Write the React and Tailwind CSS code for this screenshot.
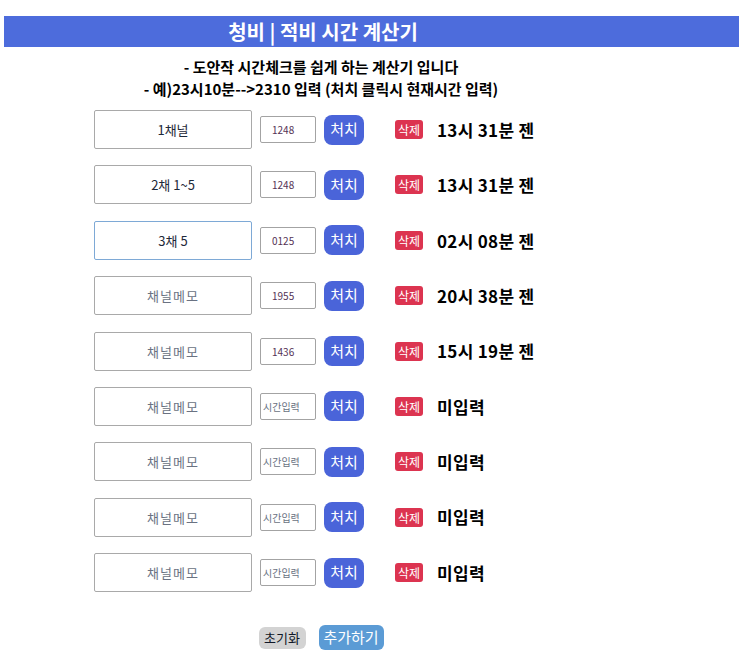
import { useState } from 'react';

const initialRows = [
  { memo: '1채널', time: '1248', result: '13시 31분 젠' },
  { memo: '2채 1~5', time: '1248', result: '13시 31분 젠' },
  { memo: '3채 5', time: '0125', result: '02시 08분 젠', focused: true },
  { memo: '', time: '1955', result: '20시 38분 젠' },
  { memo: '', time: '1436', result: '15시 19분 젠' },
  { memo: '', time: '', result: '미입력' },
  { memo: '', time: '', result: '미입력' },
  { memo: '', time: '', result: '미입력' },
  { memo: '', time: '', result: '미입력' },
];

const font = { fontFamily: '"Noto Sans CJK KR", "Noto Sans", sans-serif' };

function TimerRow({ row }) {
  return (
    <div className="flex items-center h-[39px] pl-[94px]">
      <input
        type="text"
        readOnly
        value={row.memo}
        placeholder="채널메모"
        className={`w-[158px] h-[39px] border rounded-[2px] text-center text-[13px] text-gray-800 placeholder:text-gray-500 placeholder:tracking-[1px] outline-none ${
          row.focused ? 'border-[#7ea9d6]' : 'border-[#a9a9a9]'
        }`}
      />
      <input
        type="text"
        readOnly
        value={row.time}
        placeholder="시간입력"
        className={`ml-2 w-[56px] h-[27px] border border-[#a3a3a3] rounded-[2px] text-[10px] text-[#553355] placeholder:text-gray-500 outline-none ${
          row.time ? 'pl-[11px]' : 'pl-[2px]'
        }`}
      />
      <button className="ml-2 w-[40px] h-[30px] rounded-lg bg-[#4a64d9] text-white text-[15px] font-normal">
        처치
      </button>
      <span className="ml-[31px] w-[28px] h-[19px] rounded-[3px] bg-[#dc3450] text-white text-[12px] leading-[19px] text-center">
        삭제
      </span>
      <span className="ml-[14px] text-[17px] font-bold text-black tracking-[0.3px]">{row.result}</span>
    </div>
  );
}

export default function App() {
  const [rows] = useState(initialRows);

  return (
    <div className="bg-white min-h-[664px] pt-[16px]" style={font}>
      <div className="mx-1 h-[31px] bg-[#4d6cdc] flex items-center">
        <h1 className="w-[638px] text-center text-white text-[20px] font-bold leading-none">
          청비 | 적비 시간 계산기
        </h1>
      </div>
      <div className="w-[642px] mt-[9px] text-center text-[15px] font-bold text-black leading-[22px]">
        <p>- 도안작 시간체크를 쉽게 하는 계산기 입니다</p>
        <p>- 예)23시10분--&gt;2310 입력 (처치 클릭시 현재시간 입력)</p>
      </div>
      <div className="mt-[10px] flex flex-col gap-[16.4px]">
        {rows.map((row, i) => (
          <TimerRow key={i} row={row} />
        ))}
      </div>
      <div className="w-[642px] mt-[33px] flex justify-center items-center gap-[13px]">
        <button className="w-[47px] h-[22px] rounded-md bg-[#d3d3d3] text-[13px] text-gray-900">
          초기화
        </button>
        <button className="w-[65px] h-[25px] rounded-md bg-[#5b9bd5] text-[15px] text-white">
          추가하기
        </button>
      </div>
    </div>
  );
}
